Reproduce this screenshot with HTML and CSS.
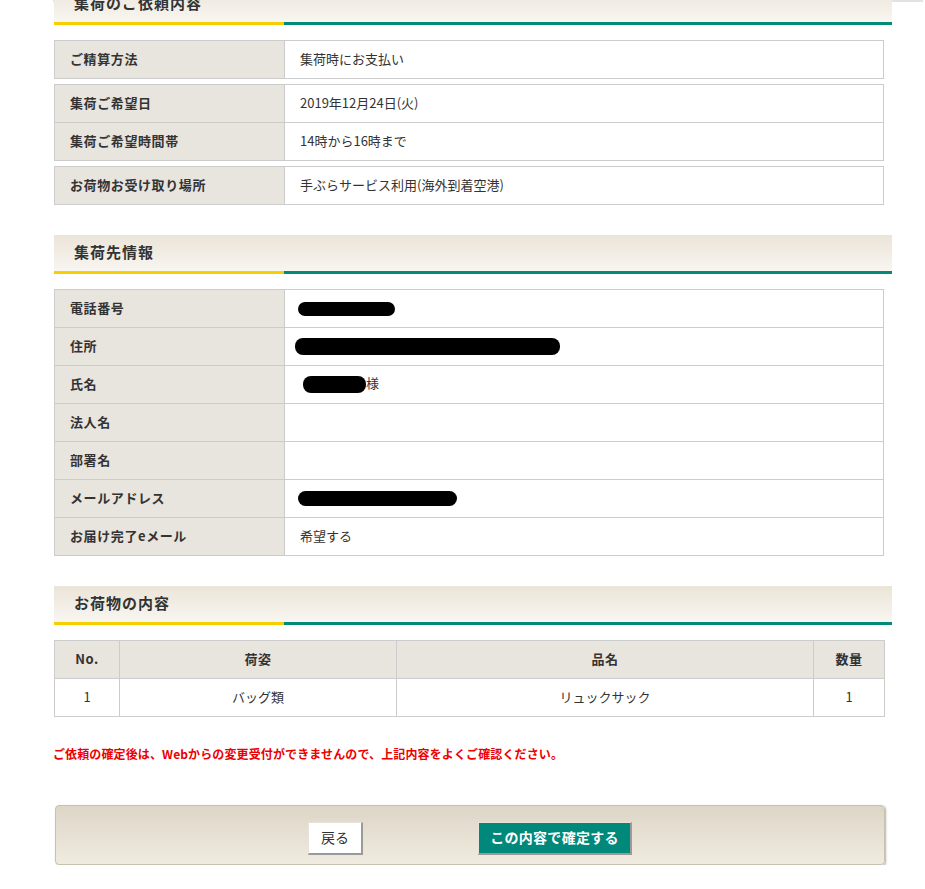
FILE: index.html
```html
<!DOCTYPE html>
<html lang="ja">
<head>
<meta charset="utf-8">
<title>集荷のご依頼内容</title>
<link rel="stylesheet" href="styles.css">
</head>
<body>
<div class="topline"></div>
<div class="page">
  <h2 class="sec-head first">集荷のご依頼内容</h2>
  <table class="info lead">
    <colgroup><col class="c-label"><col></colgroup>
    <tr><th>ご精算方法</th><td>集荷時にお支払い</td></tr>
  </table>
  <table class="info">
    <colgroup><col class="c-label"><col></colgroup>
    <tr><th>集荷ご希望日</th><td>2019年12月24日(火)</td></tr>
    <tr><th>集荷ご希望時間帯</th><td>14時から16時まで</td></tr>
  </table>
  <table class="info">
    <colgroup><col class="c-label"><col></colgroup>
    <tr><th>お荷物お受け取り場所</th><td>手ぶらサービス利用(海外到着空港)</td></tr>
  </table>

  <h2 class="sec-head">集荷先情報</h2>
  <table class="info lead">
    <colgroup><col class="c-label"><col></colgroup>
    <tr><th>電話番号</th><td><span class="redact r-phone"></span></td></tr>
    <tr><th>住所</th><td><span class="redact r-addr"></span></td></tr>
    <tr><th>氏名</th><td><span class="redact r-name"></span>様</td></tr>
    <tr><th>法人名</th><td></td></tr>
    <tr><th>部署名</th><td></td></tr>
    <tr><th>メールアドレス</th><td><span class="redact r-mail"></span></td></tr>
    <tr><th>お届け完了eメール</th><td>希望する</td></tr>
  </table>

  <h2 class="sec-head">お荷物の内容</h2>
  <table class="items lead">
    <colgroup><col class="c-no"><col class="c-type"><col class="c-name"><col class="c-qty"></colgroup>
    <tr><th>No.</th><th>荷姿</th><th>品名</th><th>数量</th></tr>
    <tr><td>1</td><td>バッグ類</td><td>リュックサック</td><td>1</td></tr>
  </table>

  <p class="note">ご依頼の確定後は、Webからの変更受付ができませんので、上記内容をよくご確認ください。</p>

  <div class="actions">
    <button class="btn btn-back" type="button">戻る</button>
    <button class="btn btn-ok" type="button">この内容で確定する</button>
  </div>
</div>
</body>
</html>
```
FILE: styles.css
```css
html, body {
  margin: 0;
  padding: 0;
  background: #fff;
}
body {
  font-family: "Noto Sans CJK JP", "Noto Sans", sans-serif;
  color: #333;
  font-size: 13px;
}
.topline {
  position: absolute;
  top: 0;
  left: 53px;
  width: 870px;
  height: 2px;
  background: #e2e2e2;
}
.page {
  display: flow-root;
  padding-left: 54px;
  width: 838px;
}
.sec-head {
  margin: 30px 0 0;
  height: 36px;
  line-height: 34px;
  padding-left: 20px;
  font-size: 15px;
  font-weight: bold;
  letter-spacing: 1px;
  color: #333;
  background: linear-gradient(#ebe4d8, #f8f6f1);
  border-bottom: 3px solid #008a78;
  position: relative;
}
.sec-head::after {
  content: "";
  position: absolute;
  left: 0;
  bottom: -3px;
  width: 230px;
  height: 3px;
  background: #f7cf00;
}
.sec-head.first {
  margin-top: -14px;
}
table {
  width: 830px;
  border-collapse: collapse;
  table-layout: fixed;
  margin-top: 5px;
}
table.lead {
  margin-top: 15px;
}
th, td {
  border: 1px solid #cccccc;
  height: 35px;
  padding: 0 0 2px 15px;
  font-size: 13px;
  line-height: 18px;
  text-align: left;
  vertical-align: middle;
}
th {
  background: #e8e4de;
  font-weight: bold;
  letter-spacing: 0.6px;
  color: #333;
}
td {
  background: #fff;
  font-weight: normal;
  color: #333;
}
.c-label { width: 230px; }
.items th, .items td {
  text-align: center;
  padding: 0 0 2px;
}
.c-no { width: 65px; }
.c-type { width: 277px; }
.c-name { width: 417px; }
.c-qty { width: 71px; }
.redact {
  display: inline-block;
  vertical-align: middle;
  background: #000;
  border-radius: 8px;
}
.r-phone { width: 97px; height: 14px; margin-left: -2px; }
.r-addr { width: 265px; height: 17px; margin-left: -5px; }
.r-name { width: 63px; height: 17px; margin-left: 3px; }
.r-mail { width: 159px; height: 15px; margin-left: -2px; }
.note {
  margin: 27px 0 0 -1px;
  font-size: 12px;
  line-height: 20px;
  font-weight: bold;
  letter-spacing: 0.12px;
  color: #ee0000;
}
.actions {
  box-sizing: border-box;
  margin: 41px 0 0 1px;
  width: 830px;
  height: 60px;
  padding-top: 16px;
  border: 1px solid #c9c0b0;
  border-radius: 4px;
  background: linear-gradient(#ddd6c7, #f0ebe0);
  box-shadow: 1px 1px 2px rgba(0, 0, 0, 0.3);
  display: flex;
  justify-content: center;
  align-items: flex-start;
  gap: 115px;
}
.btn {
  box-sizing: border-box;
  height: 33px;
  margin: 0;
  padding: 0 0 2px;
  font-family: "Noto Sans CJK JP", "Noto Sans", sans-serif;
  font-size: 14px;
  border-top: 1px solid #e6e2da;
  border-left: 1px solid #e6e2da;
  border-right: 2px solid #9a9a9a;
  border-bottom: 2px solid #9a9a9a;
  cursor: pointer;
}
.btn-back {
  width: 55px;
  background: #fff;
  color: #333;
}
.btn-ok {
  width: 154px;
  background: #00897a;
  color: #fff;
  font-weight: bold;
  letter-spacing: 0.3px;
}
```
